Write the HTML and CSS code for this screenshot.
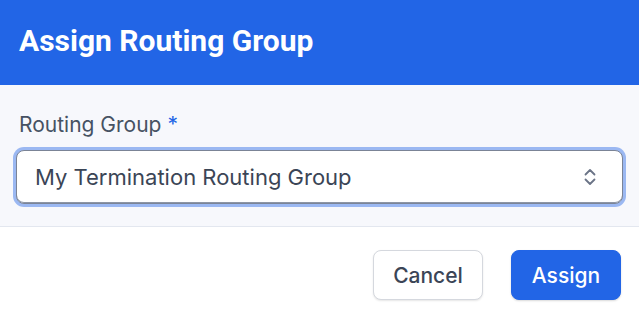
FILE: index.html
```html
<!DOCTYPE html>
<html>
    <head>
        <meta charset="UTF-8">
        <link rel="stylesheet" href="styles.css">
        <title>Assign Routing Group</title>
    </head>
    <body>
        <div class="dialog">
            <div class="dialog-header">
                <h1 class="dialog-title">Assign Routing Group</h1>
            </div>
            <div class="dialog-body">
                <label class="field-label" for="group">Routing Group <span class="required">*</span></label>
                <div class="select-wrap">
                    <select id="group" class="select">
                        <option>My Termination Routing Group</option>
                    </select>
                    <svg class="select-icon" width="12" height="18" viewBox="0 0 12 18">
                        <path d="M1.5 6.5 L6 2 L10.5 6.5" fill="none" stroke="#6b7487" stroke-width="1.8" stroke-linecap="round" stroke-linejoin="round"/>
                        <path d="M1.5 11.5 L6 16 L10.5 11.5" fill="none" stroke="#6b7487" stroke-width="1.8" stroke-linecap="round" stroke-linejoin="round"/>
                    </svg>
                </div>
            </div>
            <div class="dialog-footer">
                <button class="btn btn-cancel">Cancel</button>
                <button class="btn btn-primary">Assign</button>
            </div>
        </div>
    </body>
</html>
```

FILE: styles.css
```css
html, body {
    margin: 0;
    padding: 0;
    background: #ffffff;
}
.dialog {
    width: 639px;
    height: 314px;
    font-family: Inter, "Noto Sans", sans-serif;
}
.dialog-header {
    background-color: #2265e6;
    height: 85px;
    display: flex;
    align-items: center;
    padding: 0 19px 4px 19px;
    box-sizing: border-box;
}
.dialog-title {
    margin: 0;
    color: #ffffff;
    font-family: Roboto, sans-serif;
    font-weight: 700;
    font-size: 30px;
}
.dialog-body {
    background: #f7f8fc;
    border-bottom: 1px solid #e3e7ef;
    padding: 27px 16px 20px 16px;
    height: 142px;
    box-sizing: border-box;
}
.field-label {
    display: block;
    color: #465263;
    font-size: 21px;
    margin: 0 0 13px 3px;
}
.required {
    color: #2265e6;
}
.select-wrap {
    position: relative;
}
.select {
    -webkit-appearance: none;
    appearance: none;
    width: 100%;
    height: 54px;
    box-sizing: border-box;
    border: 1px solid #7b8496;
    border-radius: 8px;
    background: #ffffff;
    box-shadow: 0 0 0 3px #9bb8f2, inset 0 -1px 0 #8c95a6;
    padding: 0 16px 0 18px;
    color: #3b4556;
    font-family: Inter, sans-serif;
    font-size: 22px;
    outline: none;
}
.select-icon {
    position: absolute;
    right: 27px;
    top: 18px;
}
.dialog-footer {
    display: flex;
    justify-content: flex-end;
    gap: 28px;
    padding: 23px 18px 0 0;
}
.btn {
    height: 50px;
    border-radius: 8px;
    font-family: Inter, sans-serif;
    font-size: 21px;
    font-weight: 500;
    padding: 0;
    cursor: pointer;
}
.btn-cancel {
    background: #ffffff;
    color: #3b4556;
    border: 1px solid #d5d8de;
    box-shadow: 0 1px 2px rgba(0, 0, 0, 0.1);
    width: 110px;
}
.btn-primary {
    background: #2265e6;
    color: #ffffff;
    border: 1px solid #2265e6;
    box-shadow: 0 1px 2px rgba(0, 0, 0, 0.15);
    width: 110px;
}
```
